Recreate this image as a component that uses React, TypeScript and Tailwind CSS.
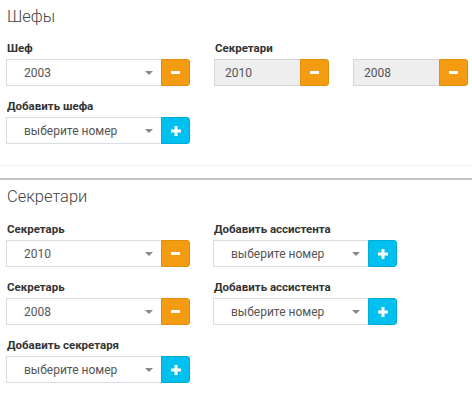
import React from "react";

const FONT = { fontFamily: "Roboto, 'Noto Sans', Arial, sans-serif" };

function Minus() {
  return <span className="block w-[9px] h-[3px] bg-white" />;
}

function Plus() {
  return (
    <svg width="10" height="10" viewBox="0 0 10 10">
      <rect x="3.5" y="0" width="3" height="10" fill="#fff" />
      <rect x="0" y="3.5" width="10" height="3" fill="#fff" />
    </svg>
  );
}

function ActionButton({ kind }: { kind: "remove" | "add" }) {
  const cls =
    kind === "remove"
      ? "bg-[#f39c12] border-[#e08e0b]"
      : "bg-[#00c0ef] border-[#00acd6]";
  return (
    <div
      className={`w-[29px] h-[27px] border rounded-r-[3px] flex items-center justify-center shrink-0 ${cls}`}
    >
      {kind === "remove" ? <Minus /> : <Plus />}
    </div>
  );
}

function SelectBox({ value, width = 155 }: { value: string; width?: number }) {
  return (
    <div
      className="h-[27px] border border-[#d9dce2] border-r-0 bg-white flex items-center pl-[17px] pr-[8px] text-[12px] text-[#555]"
      style={{ width }}
    >
      <span className="flex-1">{value}</span>
      <span className="w-0 h-0 border-l-[4px] border-r-[4px] border-t-[4px] border-l-transparent border-r-transparent border-t-[#888]" />
    </div>
  );
}

function ReadonlyBox({ value, width }: { value: string; width: number }) {
  return (
    <div
      className="h-[27px] border border-[#d2d6de] border-r-0 bg-[#eeeeee] flex items-center pl-[10px] text-[12px] text-[#555]"
      style={{ width }}
    >
      {value}
    </div>
  );
}

function Label({ children }: { children: React.ReactNode }) {
  return (
    <div className="text-[11.5px] leading-4 font-bold text-[#333] mb-[3px] pl-px">
      {children}
    </div>
  );
}

function Field({
  label,
  value,
  kind,
}: {
  label?: string;
  value: string;
  kind: "remove" | "add";
}) {
  return (
    <div className="mb-[12px]">
      <Label>{label ?? "\u00a0"}</Label>
      <div className="flex">
        <SelectBox value={value} />
        <ActionButton kind={kind} />
      </div>
    </div>
  );
}

export default function App() {
  return (
    <div className="w-[472px] h-[397px] bg-white overflow-hidden" style={FONT}>
      {/* Шефы */}
      <div className="pt-[6px] px-[6px] pb-[9px]">
        <h3 className="text-[16.5px] leading-[22px] font-light text-[#444] mb-[12px] pl-px">
          Шефы
        </h3>
        <div className="flex gap-[24px]">
          <div className="w-[184px]">
            <Field label="Шеф" value="2003" kind="remove" />
            <Field label="Добавить шефа" value="выберите номер" kind="add" />
          </div>
          <div>
            <Label>Секретари</Label>
            <div className="flex gap-[24px]">
              <div className="flex">
                <ReadonlyBox value="2010" width={86} />
                <ActionButton kind="remove" />
              </div>
              <div className="flex">
                <ReadonlyBox value="2008" width={86} />
                <ActionButton kind="remove" />
              </div>
            </div>
          </div>
        </div>
      </div>
      <div className="h-px bg-[#f0f0f0]" />
      <div className="h-[12px]" />
      <div className="h-[2px] bg-[#c4c4c4]" />

      {/* Секретари */}
      <div className="pt-[6px] px-[6px]">
        <h3 className="text-[16.5px] leading-[22px] font-light text-[#444] mb-[13px] pl-px">
          Секретари
        </h3>
        <div className="flex gap-[23px]">
          <div className="w-[184px]">
            <Field label="Секретарь" value="2010" kind="remove" />
            <Field label="Секретарь" value="2008" kind="remove" />
            <Field label="Добавить секретаря" value="выберите номер" kind="add" />
          </div>
          <div>
            <Field label="Добавить ассистента" value="выберите номер" kind="add" />
            <Field label="Добавить ассистента" value="выберите номер" kind="add" />
          </div>
        </div>
      </div>
    </div>
  );
}
